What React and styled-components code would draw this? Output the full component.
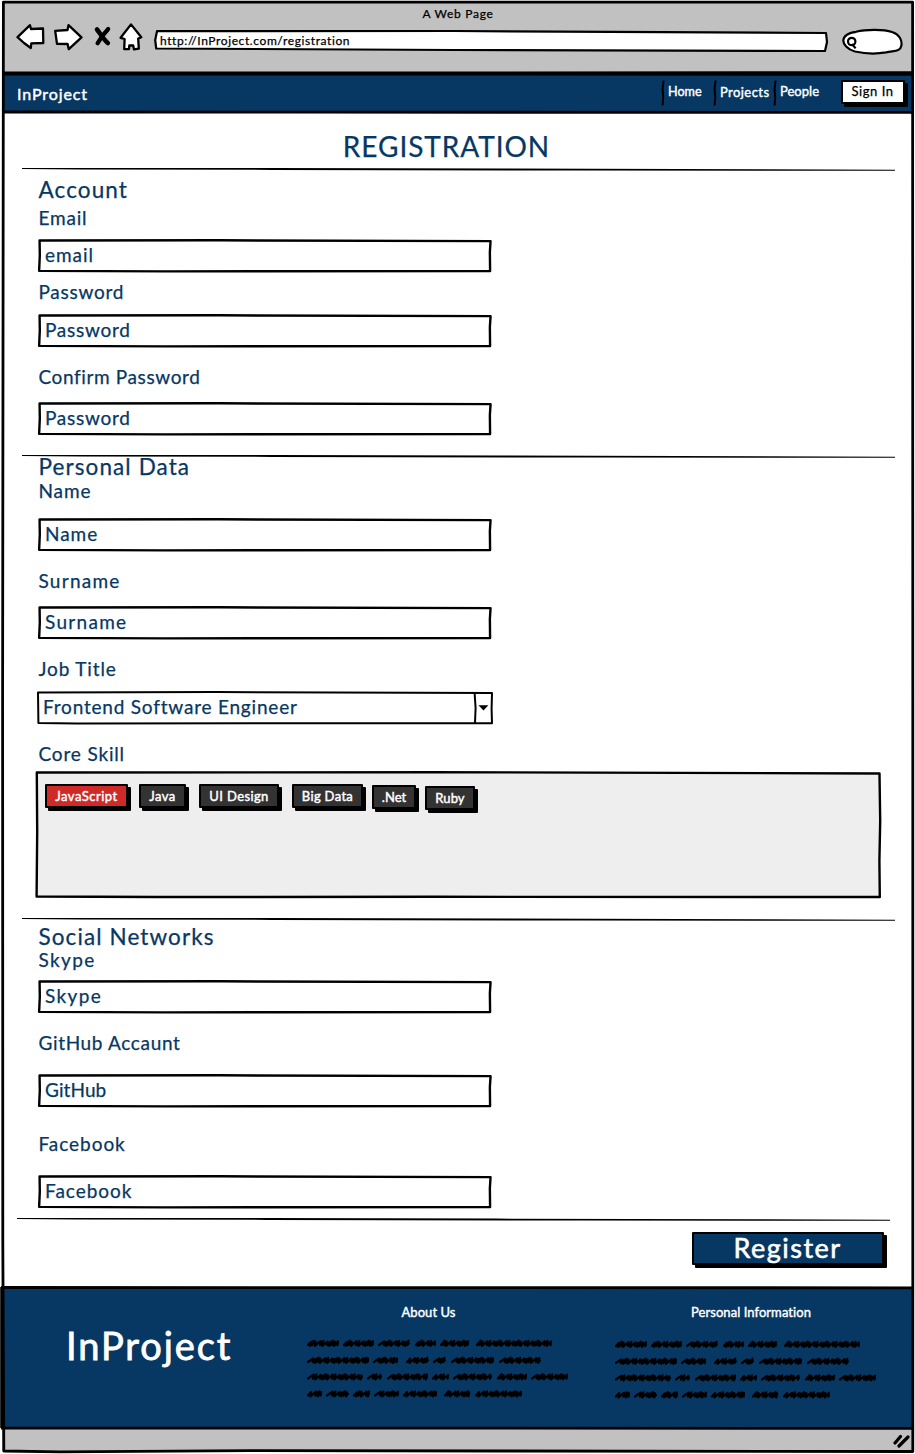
import React from "react";
import styled, { createGlobalStyle } from "styled-components";

const NAVY = "#073763";
const GRAY = "#c1c1c1";

const GlobalStyle = createGlobalStyle`
  *, *::before, *::after { box-sizing: border-box; }
  body { margin: 0; background: #fff; }
  button, input { font: inherit; }
`;

/* ---------- shared pieces ---------- */

const Page = styled.div`
  position: relative;
  display: flex;
  flex-direction: column;
  width: 915px;
  height: 1454px;
  padding: 2px 2px 0;
  overflow: hidden;
  background: #fff;
  color: ${NAVY};
  font-family: Lato, "Open Sans", sans-serif;
  -webkit-text-stroke: 0.25px currentColor;
`;

const Overlay = styled.svg`
  position: absolute;
  inset: 0;
  width: 100%;
  height: 100%;
  overflow: visible;
  pointer-events: none;
  fill: none;
  stroke: #000;
  stroke-width: ${(p) => p.$weight || 2.4}px;
  stroke-linejoin: round;
  path { vector-effect: non-scaling-stroke; }
`;

function Outline({ weight }) {
  return (
    <Overlay viewBox="0 0 100 100" preserveAspectRatio="none" $weight={weight} aria-hidden="true">
      <path d="M0.35 4.5 L40 4 L99.9 6.5 L99.75 40 L99.8 97 L50 97.5 L28 98 L0.25 96.5 L0.4 50 Z" />
    </Overlay>
  );
}

/* ---------- browser chrome ---------- */

const Chrome = styled.header`
  flex: none;
  height: 71px;
  padding: 0 10px 0 14px;
  background: ${GRAY};
  color: #000;
  font-size: 12px;
`;

const WindowTitle = styled.div`
  height: 21px;
  padding: 4px 3px 0 0;
  line-height: 15px;
  letter-spacing: 0.72px;
  text-align: center;
`;

const Tools = styled.div`
  display: flex;
  align-items: flex-start;
`;

const ToolIcon = styled.svg`
  flex: none;
  width: ${(p) => p.$w}px;
  height: 28px;
  margin-right: ${(p) => p.$after}px;
  fill: #fff;
  stroke: #000;
  stroke-width: 2.3;
  stroke-linejoin: round;
  stroke-linecap: round;
`;

const Address = styled.div`
  position: relative;
  flex: none;
  width: 674px;
  height: 22px;
  margin: 7px 14px 0 0;
  padding-left: 6px;
  color: #000;
  line-height: 21px;
  letter-spacing: 0.6px;
`;

const AddressText = styled.span`
  position: relative;
`;

const SearchBox = styled.svg`
  flex: none;
  width: 61px;
  height: 27px;
  margin-top: 5px;
  fill: #fff;
  stroke: #000;
  stroke-width: 2.2;
`;

/* ---------- site navigation ---------- */

const NavBar = styled.nav`
  display: flex;
  flex: none;
  height: 39px;
  padding: 0 6px 0 15px;
  background: ${NAVY};
  color: #fff;
`;

const Brand = styled.div`
  flex: 1;
  padding-top: 1px;
  font-size: 16px;
  line-height: 40px;
  letter-spacing: 0.9px;
  -webkit-text-stroke-width: 0.45px;
`;

const NavItem = styled.a`
  display: flex;
  width: ${(p) => p.$w}px;
  font-size: ${(p) => p.$size || 13}px;
  letter-spacing: ${(p) => p.$track}px;
  line-height: 37px;
  padding-top: ${(p) => p.$drop || 0}px;
  -webkit-text-stroke-width: 0.4px;
`;

const Divider = styled.svg`
  flex: none;
  width: 4px;
  height: 26px;
  margin: ${(p) => 7 - (p.$drop || 0)}px 3px 0 0;
  fill: none;
  stroke: #000;
  stroke-width: 2;
`;

const SignIn = styled.button`
  width: 64px;
  height: 24px;
  margin-top: 7px;
  margin-right: 2px;
  padding: 0 1px 2px 0;
  border: 2px solid #000;
  border-radius: 1px;
  background: #fff;
  box-shadow: 3px 3px 0 #000;
  color: #000;
  font-size: 13px;
  line-height: 17px;
  letter-spacing: 0.55px;
`;

/* ---------- form ---------- */

const Form = styled.form`
  display: flex;
  flex: none;
  flex-direction: column;
  align-items: flex-start;
  height: 1175px;
  padding: 17px 18px 0 20px;
`;

const Title = styled.h1`
  align-self: center;
  margin: 0 0 6px -24px;
  padding-top: 1px;
  font-size: 28px;
  font-weight: 400;
  line-height: 32px;
  letter-spacing: 0.95px;
`;

const RuleLine = styled.svg`
  flex: none;
  width: 873px;
  height: 2px;
  margin: ${(p) => p.$top || 0}px 0 0 ${(p) => p.$shift || 0}px;
  overflow: visible;
`;

function Rule(props) {
  return (
    <RuleLine viewBox="0 0 873 2" aria-hidden="true" {...props}>
      <path d="M0 0.1 L250 0.1 L480 0.6 L873 1.7 L873 2.7 L560 2.6 L250 1.9 L60 1.4 L0 0.9 Z" />
    </RuleLine>
  );
}

const SectionTitle = styled.h2`
  margin: ${(p) => p.$top}px 0 0 16.5px;
  font-size: 22.5px;
  font-weight: 400;
  line-height: 20px;
  letter-spacing: 1.1px;
`;

const Label = styled.label`
  margin: ${(p) => p.$top}px 0 0 16.5px;
  font-size: 19px;
  line-height: 24px;
  letter-spacing: ${(p) => p.$track}px;
`;

const Field = styled.div`
  position: relative;
  flex: none;
  width: 453px;
  height: 33px;
  margin: ${(p) => p.$top}px 0 0 16px;
  padding-left: 7px;
  font-size: 19px;
  line-height: 32px;
  letter-spacing: ${(p) => p.$track}px;
`;

const Select = styled(Field)`
  display: flex;
  justify-content: space-between;
  width: 456px;
  padding-left: 6px;
  margin-left: 15px;
`;

const SelectArrow = styled.svg`
  width: 20px;
  height: 33px;
`;

const SkillPanel = styled.div`
  position: relative;
  display: flex;
  align-items: flex-start;
  flex: none;
  width: 845px;
  height: 127px;
  margin: 5px 0 0 14px;
  padding: 13px 0 0 9px;
  background: linear-gradient(#eee, #eee) 1px 2px / 842px 123px no-repeat;
`;

const Tag = styled.span`
  position: relative;
  width: ${(p) => p.$w}px;
  height: 24px;
  margin: ${(p) => p.$drop || 0}px ${(p) => p.$after}px 0 0;
  border: 2px solid #000;
  border-radius: 1px;
  background: ${(p) => (p.$active ? "#cf2a27" : "#333")};
  box-shadow: 3px 3px 0 #000;
  color: #fff;
  font-size: 13px;
  line-height: 20px;
  letter-spacing: ${(p) => p.$track}px;
  text-align: center;
  -webkit-text-stroke-width: 0.45px;
`;

const RegisterButton = styled.button`
  flex: none;
  align-self: flex-end;
  width: 192px;
  height: 33px;
  margin: 12px 11px 0 0;
  padding: 0 1px 1px 0;
  border: 2px solid #000;
  border-radius: 1px;
  background: ${NAVY};
  box-shadow: 3px 3px 0 #000;
  color: #fff;
  font-size: 27px;
  line-height: 28px;
  letter-spacing: 1.5px;
  -webkit-text-stroke-width: 0.6px;
`;

/* ---------- footer ---------- */

const Footer = styled.footer`
  display: flex;
  flex: none;
  height: 141px;
  padding-left: 64px;
  background: ${NAVY};
  color: #fff;
`;

const FooterBrand = styled.div`
  flex: none;
  width: 241px;
  padding-top: 34px;
  font-size: 38px;
  line-height: 48px;
  letter-spacing: 1.9px;
  -webkit-text-stroke-width: 0.8px;
`;

const FooterColumn = styled.section`
  flex: none;
  width: ${(p) => p.$w}px;
`;

const FooterHeading = styled.h3`
  width: ${(p) => p.$w}px;
  margin: 16px 0 0;
  font-size: 13px;
  font-weight: 400;
  line-height: 18px;
  letter-spacing: 0.06px;
  text-align: center;
  -webkit-text-stroke-width: 0.4px;
`;

const ScribbleArt = styled.svg`
  display: block;
  width: 264px;
  height: 64px;
  margin-top: ${(p) => p.$top}px;
  fill: none;
  stroke: #000;
  stroke-width: 2.2;
  stroke-linecap: round;
  stroke-linejoin: round;
`;

const StatusBar = styled.div`
  display: flex;
  flex: none;
  justify-content: flex-end;
  height: 23px;
  padding: 6px 3px 0 0;
  background: ${GRAY};
`;

const Grip = styled.svg`
  width: 17px;
  height: 14px;
  stroke: #000;
  stroke-width: 3.2;
  stroke-linecap: round;
`;

/* Each pair is the start and end of one scribbled word. */
const SCRIBBLES = [
  { y: 8.5, words: [[0, 32], [36, 67], [71, 103], [108, 129], [133, 162], [169, 245]] },
  { y: 25.5, words: [[0, 62], [66, 91], [99, 122], [126, 139], [144, 187], [192, 234]] },
  { y: 42, words: [[0, 56], [60, 75], [80, 121], [125, 142], [146, 185], [190, 220], [224, 261]] },
  { y: 59, words: [[0, 15], [19, 42], [46, 63], [67, 92], [96, 130], [137, 163], [168, 215]] },
];

const STROKES = [
  { run: 5.6, rise: 2.3, back: 0.6 },
  { run: 3.4, rise: 2.6, back: 1.1 },
  { run: 5.2, rise: 2, back: 0.4 },
  { run: 3, rise: 1.7, back: 0.9 },
  { run: 3.6, rise: 2.8, back: 1.2 },
  { run: 3.2, rise: 1.9, back: 0.7 },
];

function scribble(x0, x1, y) {
  const end = x1 - 1;
  let x = x0 + 1;
  let d = `M${x} ${y + 1.5}`;
  let i = Math.round(x0 + y) % STROKES.length;
  while (x < end - 2) {
    const { run, rise, back } = STROKES[i % STROKES.length];
    const peak = Math.min(x + run, end);
    const low = y + (i % 2 ? 2.4 : 1.6);
    d += ` L${peak.toFixed(1)} ${(y - rise).toFixed(1)} L${(peak - back).toFixed(1)} ${low.toFixed(1)}`;
    x = peak - back;
    i += 1;
  }
  return `${d} L${end} ${y - 0.2}`;
}

function Scribbles({ top }) {
  return (
    <ScribbleArt viewBox="0 0 264 64" $top={top} aria-hidden="true">
      {SCRIBBLES.map(({ y, words }) =>
        words.map(([a, b]) => <path key={`${y}-${a}`} d={scribble(a, b, y)} />)
      )}
    </ScribbleArt>
  );
}

const TAGS = [
  { text: "JavaScript", w: 83, after: 11, track: 0.51, active: true },
  { text: "Java", w: 47, after: 13, track: 0.5 },
  { text: "UI Design", w: 80, after: 13, track: 0.38 },
  { text: "Big Data", w: 71, after: 9, track: 0.33 },
  { text: ".Net", w: 44, after: 9, track: 0, drop: 1 },
  { text: "Ruby", w: 50, after: 0, track: 0.1, drop: 2 },
];

function TextField({ label, value, labelTop, fieldTop, labelTrack, valueTrack }) {
  return (
    <>
      <Label $top={labelTop} $track={labelTrack}>{label}</Label>
      <Field $top={fieldTop} $track={valueTrack}>
        {value}
        <Outline />
      </Field>
    </>
  );
}

function NavDivider({ drop }) {
  return (
    <Divider viewBox="0 0 4 26" $drop={drop}>
      <path d="M2.6 0.5 L1.6 9 L2.2 17 L1.6 25.5" />
    </Divider>
  );
}

export default function App() {
  return (
    <Page>
      <GlobalStyle />
      <Chrome>
        <WindowTitle>A Web Page</WindowTitle>
        <Tools>
          <ToolIcon viewBox="0 0 30 28" $w={30} $after={7}>
            <path d="M1.5 14.2 L14 2.2 L15 6 L27 5.5 L27.3 20 L15.3 20.3 L14.8 25 L8 20 Z" />
          </ToolIcon>
          <ToolIcon viewBox="0 0 30 28" $w={30} $after={9}>
            <path d="M2.2 7.8 L14.5 7 L15.5 2.2 L28.5 14.4 L15.8 26.2 L14.6 21 L4 20.8 Z" />
          </ToolIcon>
          <ToolIcon viewBox="0 0 20 28" $w={20} $after={6}>
            <path d="M5 6.5 C7.5 9.5 12 17 15.8 20" strokeWidth="4.6" fill="none" />
            <path d="M16.2 6 C12 10.5 8.5 15 5.6 20.2" strokeWidth="4.2" fill="none" />
          </ToolIcon>
          <ToolIcon viewBox="0 0 26 28" $w={26} $after={10}>
            <path d="M13 1.4 L23.3 14.2 L20.2 15.6 L20.8 25.6 L16 26.4 L15.2 22.5 L11.3 22.5 L11 26.2 L6.2 26.2 L6.6 16 L2.6 14.8 Z" />
          </ToolIcon>
          <Address>
            <Overlay viewBox="0 0 674 22" $weight={2.2}>
              <path fill="#fff" d="M3 1.2 L300 1 L672 3 L673 12 L671 21 L300 20 L2.2 18.5 L1.2 10 Z" />
            </Overlay>
            <AddressText>http://InProject.com/registration</AddressText>
          </Address>
          <SearchBox viewBox="0 0 61 27">
            <path d="M14 3.8 C24 1.2 42 1.2 50 4 C57 6 60.5 12 59.3 18 C58 24 52 22.5 44 24.4 C35 26 22 25.5 13 23.5 C5 21.5 1.3 16 1.3 12.5 C1.5 8 6 5 14 3.8 Z" />
            <circle cx="9.7" cy="13.5" r="3.7" />
            <path d="M10 16 L13.6 20.4" />
          </SearchBox>
        </Tools>
      </Chrome>

      <NavBar>
        <Brand>InProject</Brand>
        <NavItem $w={52} $track={0} $size={12.6}><NavDivider />Home</NavItem>
        <NavItem $w={60} $track={0.43} $drop={1}><NavDivider drop={1} />Projects</NavItem>
        <NavItem $w={68} $track={0.02}><NavDivider />People</NavItem>
        <SignIn type="button">Sign In</SignIn>
      </NavBar>

      <Form>
        <Title>REGISTRATION</Title>
        <Rule />
        <SectionTitle $top={10}>Account</SectionTitle>
        <TextField label="Email" value="email" labelTop={6} fieldTop={9} labelTrack={0.79} valueTrack={0.96} />
        <TextField label="Password" value="Password" labelTop={8} fieldTop={10} labelTrack={0.75} valueTrack={0.75} />
        <TextField label="Confirm Password" value="Password" labelTop={18} fieldTop={13} labelTrack={0.62} valueTrack={0.75} />
        <Rule $top={20} />

        <SectionTitle $top={0}>Personal Data</SectionTitle>
        <TextField label="Name" value="Name" labelTop={2} fieldTop={15} labelTrack={0.89} valueTrack={0.95} />
        <TextField label="Surname" value="Surname" labelTop={18} fieldTop={13} labelTrack={1.25} valueTrack={1.3} />
        <Label $top={18} $track={0.85}>Job Title</Label>
        <Select $top={10} $track={0.8}>
          Frontend Software Engineer
          <SelectArrow viewBox="0 0 20 33">
            <path d="M1.6 2 L2.6 17 L2 32" fill="none" stroke="#000" strokeWidth="2" />
            <path d="M5.5 14.2 L15.4 14.2 L10.5 19.4 Z" />
          </SelectArrow>
          <Overlay viewBox="0 0 456 33" $weight={2}>
            <path d="M1 1.5 L180 1 L455 2 L454.6 18 L455 32.2 L40 32.5 L1.4 32 L1.2 16 Z" />
          </Overlay>
        </Select>
        <Label $top={18} $track={0.84}>Core Skill</Label>
        <SkillPanel>
          <Overlay viewBox="0 0 845 127">
            <path d="M0.8 1.5 L400 1.2 L843.5 2.5 L844.2 50 L843.4 90 L843.8 126 L400 125.8 L120 126 L0.6 125.5 L1.2 60 Z" />
          </Overlay>
          {TAGS.map((t) => (
            <Tag key={t.text} $w={t.w} $after={t.after} $track={t.track} $drop={t.drop} $active={t.active}>
              {t.text}
            </Tag>
          ))}
        </SkillPanel>
        <Rule $top={20} />

        <SectionTitle $top={7}>Social Networks</SectionTitle>
        <TextField label="Skype" value="Skype" labelTop={1} fieldTop={8} labelTrack={1.35} valueTrack={1.35} />
        <TextField label="GitHub Accaunt" value="GitHub" labelTop={18} fieldTop={19} labelTrack={0.65} valueTrack={0.1} />
        <TextField label="Facebook" value="Facebook" labelTop={25} fieldTop={19} labelTrack={0.95} valueTrack={0.98} />
        <Rule $top={10} $shift={-5} />
        <RegisterButton type="button">Register</RegisterButton>
      </Form>

      <Footer>
        <FooterBrand>InProject</FooterBrand>
        <FooterColumn $w={308}>
          <FooterHeading $w={243}>About Us</FooterHeading>
          <Scribbles top={14} />
        </FooterColumn>
        <FooterColumn $w={290}>
          <FooterHeading $w={272}>Personal Information</FooterHeading>
          <Scribbles top={15} />
        </FooterColumn>
      </Footer>
      <StatusBar>
        <Grip viewBox="0 0 17 14">
          <path d="M2 9 L7.5 2.5 M6 12 L15 3" />
        </Grip>
      </StatusBar>

      <Overlay viewBox="0 0 915 1454" $weight={2.8} aria-hidden="true">
        <path d="M3.4 2.2 H912.6 L912.8 700 L912.8 1451.5 L500 1451 L250 1450.6 L60 1451.8 L3.8 1451 L2.8 1240 L2.6 700 Z" />
        <path d="M3 72.9 L300 73 L913 72.6 M3 74 L913 74.4 M3 112 L300 112.2 L913 112.4" />
        <path d="M1 1287.5 L913 1287.8 M1 1428 L913 1428.4 M1.6 1287 V1428" />
      </Overlay>
    </Page>
  );
}
